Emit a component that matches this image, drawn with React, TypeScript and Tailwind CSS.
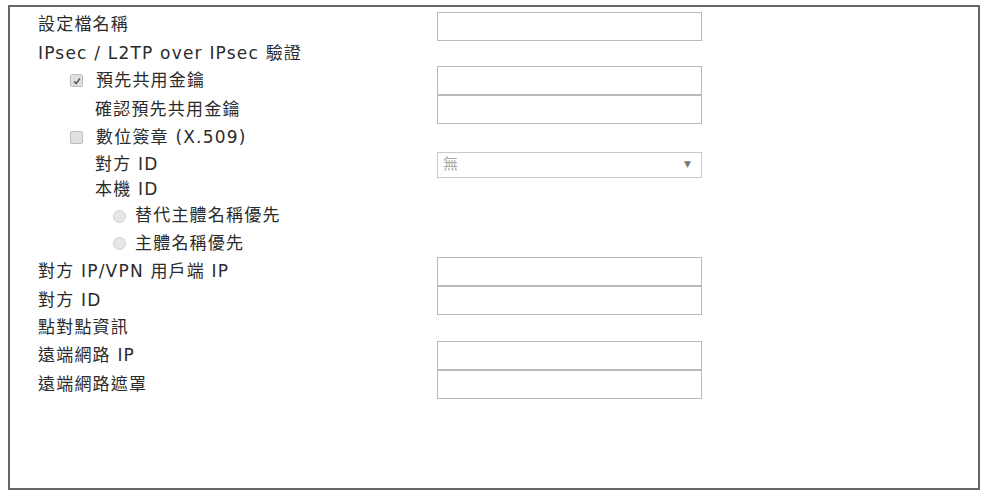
import React from "react";

const font = {
  fontFamily: '"DejaVu Sans", "Noto Sans CJK TC", sans-serif',
};

function TextBox() {
  return <div className="h-[29px] w-[265px] border border-[#b9b9b9] bg-white" />;
}

function Check({ checked }: { checked?: boolean }) {
  return (
    <span className="mr-[13px] flex h-[13px] w-[13px] items-center justify-center rounded-[2px] border border-[#bdbdbd] bg-[#e0e0e0]">
      {checked && (
        <svg viewBox="0 0 12 12" className="h-[10px] w-[10px]">
          <path d="M2.5 6.5 L5 9 L9.5 3" fill="none" stroke="#5e5e5e" strokeWidth="2" />
        </svg>
      )}
    </span>
  );
}

function Radio() {
  return <span className="mr-[9px] h-[13px] w-[13px] rounded-full border border-[#cfcfcf] bg-[#e6e6e6]" />;
}

type Row = {
  label: string;
  indent: string;
  h: string;
  field?: "input" | "select";
  lead?: React.ReactNode;
};

const rows: Row[] = [
  { label: "設定檔名稱", indent: "pl-[28px]", h: "h-[33px]", field: "input" },
  { label: "IPsec / L2TP over IPsec 驗證", indent: "pl-[28px]", h: "h-[25px]" },
  { label: "預先共用金鑰", indent: "pl-[60px]", h: "h-[29px]", field: "input", lead: <Check checked /> },
  { label: "確認預先共用金鑰", indent: "pl-[85px]", h: "h-[29px]", field: "input" },
  { label: "數位簽章 (X.509)", indent: "pl-[60px]", h: "h-[27px]", lead: <Check /> },
  { label: "對方 ID", indent: "pl-[85px]", h: "h-[27px]", field: "select" },
  { label: "本機 ID", indent: "pl-[85px]", h: "h-[24px]" },
  { label: "替代主體名稱優先", indent: "pl-[103px]", h: "h-[28px]", lead: <Radio /> },
  { label: "主體名稱優先", indent: "pl-[103px]", h: "h-[27px]", lead: <Radio /> },
  { label: "對方 IP/VPN 用戶端 IP", indent: "pl-[28px]", h: "h-[29px]", field: "input" },
  { label: "對方 ID", indent: "pl-[28px]", h: "h-[29px]", field: "input" },
  { label: "點對點資訊", indent: "pl-[28px]", h: "h-[26px]" },
  { label: "遠端網路 IP", indent: "pl-[28px]", h: "h-[29px]", field: "input" },
  { label: "遠端網路遮罩", indent: "pl-[28px]", h: "h-[29px]", field: "input" },
];

export default function App() {
  return (
    <div className="h-[492px] w-[985px] overflow-hidden bg-white pl-[8px] pt-[5px]" style={font}>
      <div className="h-[485px] w-[972px] border-2 border-[#666] pt-[1px]">
        {rows.map((r, i) => (
          <div key={i} className={`flex ${r.h} items-center`}>
            <div className={`flex w-[427px] shrink-0 items-center ${r.indent} text-[17px] tracking-[1.2px] text-[#2b2b2b]`}>
              {r.lead}
              <span>{r.label}</span>
            </div>
            {r.field === "input" && (i === 0 ? <div className="self-end"><TextBox /></div> : <TextBox />)}
            {r.field === "select" && (
              <div className="flex h-[26px] w-[265px] items-center justify-between border border-[#c9c9c9] bg-white pl-[5px] pr-[10px] text-[15px] text-[#a8a8a8]">
                <span>無</span>
                <span className="text-[9px] text-[#777]">▼</span>
              </div>
            )}
          </div>
        ))}
      </div>
    </div>
  );
}
